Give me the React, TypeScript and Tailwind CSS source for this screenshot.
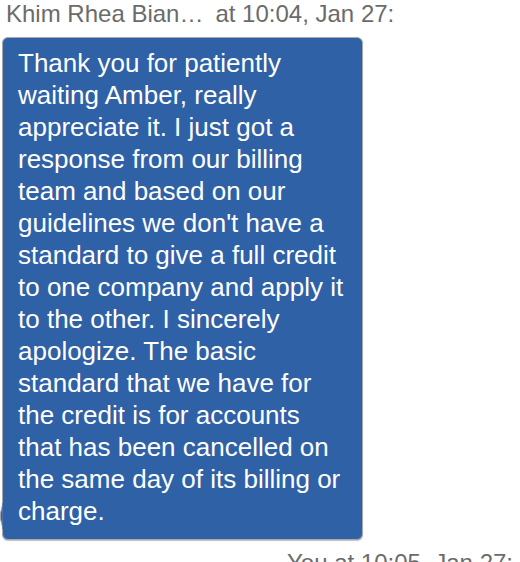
import React from 'react';

const message =
  "Thank you for patiently waiting Amber, really appreciate it. I just got a response from our billing team and based on our guidelines we don't have a standard to give a full credit to one company and apply it to the other. I sincerely apologize. The basic standard that we have for the credit is for accounts that has been cancelled on the same day of its billing or charge.";

const App: React.FC = () => {
  return (
    <div className="w-[520px] h-[562px] overflow-hidden bg-white font-['Liberation_Sans',Arial,sans-serif]">
      <div className="pl-[6px] h-[28px] text-[24px] leading-[28px] text-[#6b6b6b] whitespace-nowrap">
        <span>Khim Rhea Bian…</span>
        <span className="ml-[12px]">at 10:04, Jan 27:</span>
      </div>

      <div className="relative ml-[2px] mt-[9px] w-[361px]">
        <div className="rounded-[6px] border border-[#a9a9a9] bg-[#2f61a7] pl-[15px] pr-[14px] pt-[9px] pb-[12px] text-[26px] leading-[32px] text-white shadow-[0_1px_1px_rgba(0,0,0,0.25)]">
          {message}
        </div>
        <svg
          className="absolute left-[-2px] top-[466px]"
          width="6"
          height="26"
          viewBox="0 0 6 26"
        >
          <path d="M3 0 L0.5 10 Q0 13 0.5 16 L3 26 Z" fill="#2f61a7" stroke="#a9a9a9" strokeWidth="1" />
          <rect x="2.5" y="0" width="4" height="26" fill="#2f61a7" />
        </svg>
      </div>

      <div className="mt-[9px] pr-[7px] text-right text-[24px] leading-[28px] text-[#6b6b6b] whitespace-nowrap">
        You at 10:05, Jan 27:
      </div>
    </div>
  );
};

export default App;
